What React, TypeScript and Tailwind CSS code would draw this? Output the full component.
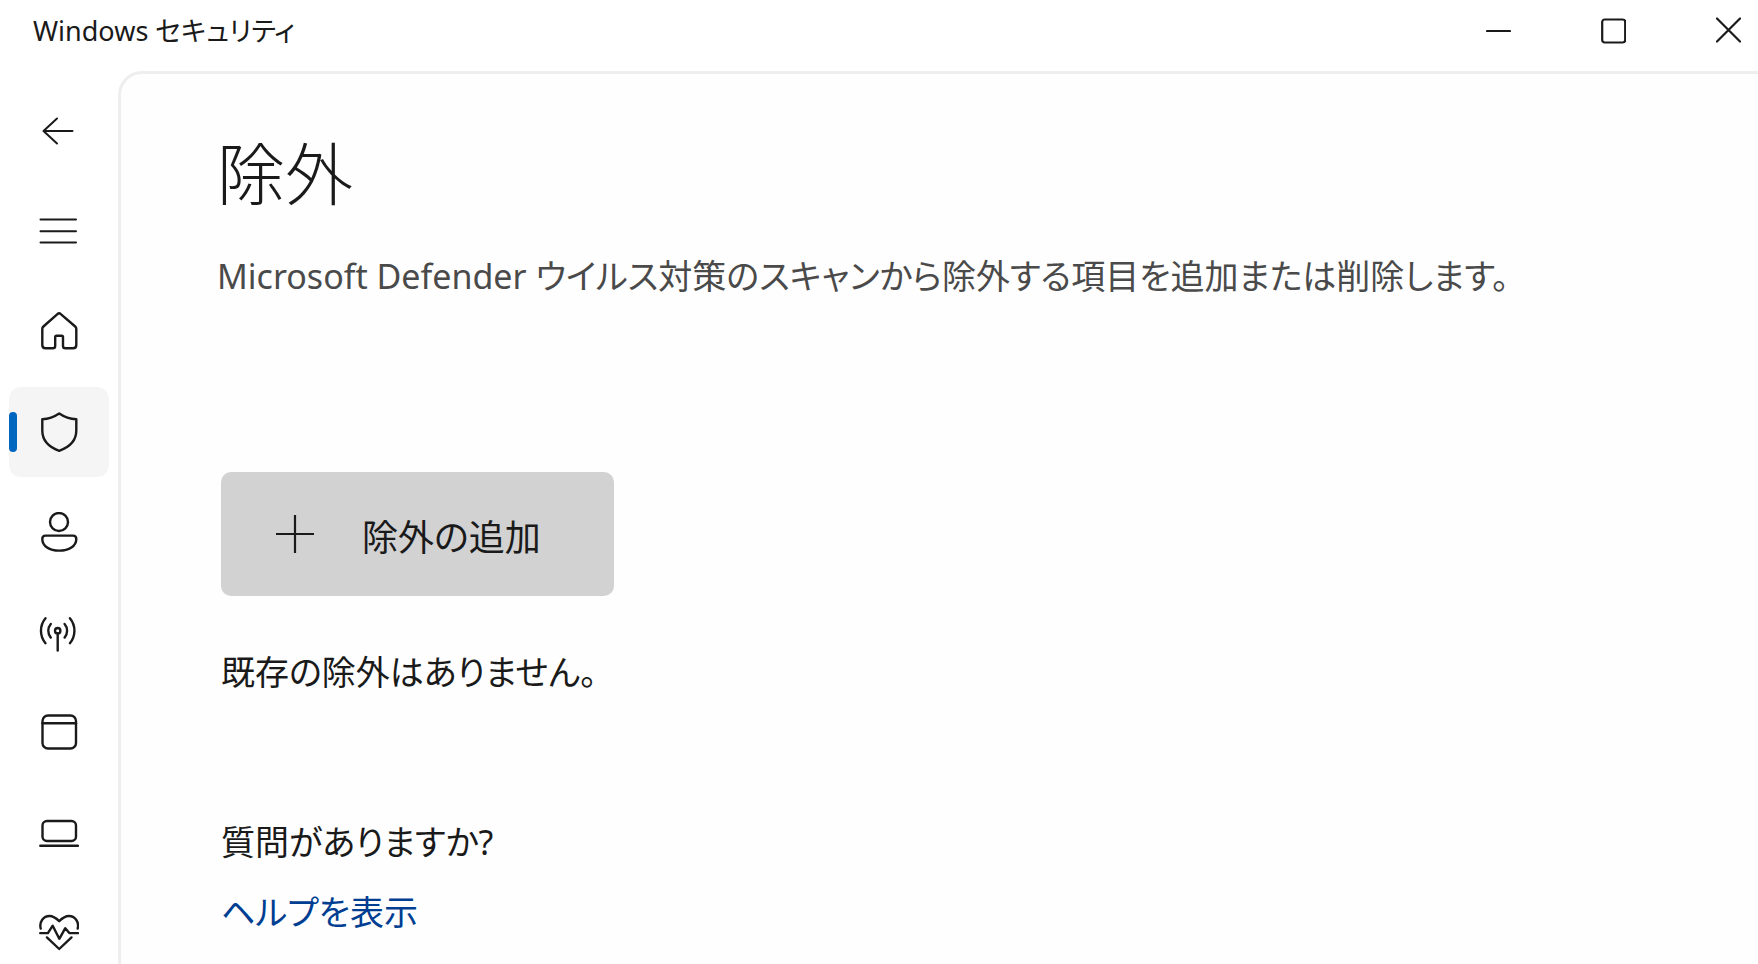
import type { ReactNode } from "react";

const navItems: { id: string; label: string; icon: ReactNode }[] = [
  {
    id: "back",
    label: "戻る",
    icon: <path strokeWidth="2" d="M33.5 19H4.5M18 6.5L4.5 19L18 31.5" />,
  },
  {
    id: "menu",
    label: "メニュー",
    icon: <path strokeWidth="2" d="M1.5 7.5h35.5M1.5 19.2h35.5M1.5 30.6h35.5" />,
  },
  {
    id: "home",
    label: "ホーム",
    icon: (
      <path d="M18.4 2.1L4.4 14.5Q3.3 15.5 3.3 17V33Q3.3 36.3 6.6 36.3H13.8Q16.2 36.3 16.2 34V25Q16.2 23.7 17.5 23.7H22.7Q24 23.7 24 25V34Q24 36.3 26.4 36.3H34Q37.3 36.3 37.3 33V17Q37.3 15.5 36.2 14.5L21.8 2.1Q20.1 .6 18.4 2.1Z" />
    ),
  },
  {
    id: "virus",
    label: "ウイルスと脅威の防止",
    icon: (
      <path d="M20.2 1.5C15 5 9.5 6.9 3.3 7.3V18.5C3.3 28 9 34.8 20.2 38.8C31.4 34.8 37.3 28 37.3 18.5V7.3C31 6.9 25.4 5 20.2 1.5Z" />
    ),
  },
  {
    id: "account",
    label: "アカウントの保護",
    icon: (
      <>
        <circle cx="20" cy="10" r="9" />
        <path d="M6.5 23.6H34Q37.3 23.6 37.3 26.9C37.3 34 30 38.6 20.2 38.6S3.3 34 3.3 26.9Q3.3 23.6 6.5 23.6Z" />
      </>
    ),
  },
  {
    id: "network",
    label: "ファイアウォールとネットワーク保護",
    icon: (
      <>
        <circle cx="18.7" cy="18.7" r="2.7" />
        <path d="M18.7 21.5V38.5" />
        <path d="M11.8 12A10.5 10.5 0 0 0 11.8 25.6M25.6 12A10.5 10.5 0 0 1 25.600 25.600" />
        <path d="M6.500 6.200A19.500 19.500 0 0 0 6.500 31.200M30.900 6.200A19.500 19.500 0 0 1 30.900 31.200" />
      </>
    ),
  },
  {
    id: "apps",
    label: "アプリとブラウザーの制御",
    icon: (
      <>
        <rect x="3.5" y="3.5" width="33.5" height="33" rx="5.5" />
        <path d="M3.5 11.3H37" />
      </>
    ),
  },
  {
    id: "device",
    label: "デバイス セキュリティ",
    icon: (
      <>
        <rect x="3.5" y="9" width="33.5" height="20" rx="4.5" />
        <path d="M1.3 33.8H39" />
      </>
    ),
  },
  {
    id: "health",
    label: "デバイスのパフォーマンスと正常性",
    icon: (
      <>
        <path d="M1.7 16.5C0 10 4.5 4 10.5 4C15 4 17.5 6.5 20.2 9.2C22.9 6.5 25.4 4 29.9 4C35.9 4 40.4 10 38.7 16.5" />
        <path d="M1.2 21.1H8.9L13.7 13.7L20.3 26.8L26.3 16.2L30.3 21.1H39" />
        <path d="M7.9 25.4L20.2 37L32.5 25.4" />
      </>
    ),
  },
];

const windowButtons = [
  { id: "minimize", label: "最小化", icon: <path d="M1 15h23" /> },
  {
    id: "maximize",
    label: "最大化",
    icon: <rect x="1.2" y="3.5" width="23" height="23" rx="2.5" />,
  },
  {
    id: "close",
    label: "閉じる",
    icon: <path d="M1 2.5l23 23M24 2.5l-23 23" />,
  },
];

function TitleBar() {
  return (
    <header className="flex h-[71px] items-center justify-between pb-2.5 pl-[33px]">
      <h1 className="text-[27px] leading-10">Windows セキュリティ</h1>
      <div className="flex gap-[55px]">
        {windowButtons.map((button) => (
          <button
            key={button.id}
            type="button"
            aria-label={button.label}
            className="flex h-10 w-[60px] items-center justify-center"
          >
            <svg
              viewBox="0 0 25 30"
              className="h-[30px] w-[25px]"
              fill="none"
              stroke="currentColor"
              strokeWidth="2.2"
              strokeLinecap="round"
            >
              {button.icon}
            </svg>
          </button>
        ))}
      </div>
    </header>
  );
}

function Sidebar() {
  const selected = "virus";

  return (
    <nav className="flex w-[118px] shrink-0 flex-col items-center gap-2.5 pt-4">
      {navItems.map((item) => (
        <button
          key={item.id}
          type="button"
          aria-label={item.label}
          className={
            item.id === selected
              ? "relative flex h-[90px] w-[100px] shrink-0 items-center justify-center rounded-xl bg-[#f5f5f5]"
              : "relative flex h-[90px] w-[100px] shrink-0 items-center justify-center rounded-xl"
          }
        >
          {item.id === selected && (
            <span className="absolute left-0 h-10 w-2 rounded-full bg-[#0067c0]" />
          )}
          <svg
            viewBox="0 0 40 40"
            className="size-10"
            fill="none"
            stroke="currentColor"
            strokeWidth="2.4"
            strokeLinecap="round"
            strokeLinejoin="round"
          >
            {item.icon}
          </svg>
        </button>
      ))}
    </nav>
  );
}

export default function App() {
  return (
    <div className="flex h-screen flex-col overflow-hidden bg-white font-['Noto_Sans','Noto_Sans_CJK_JP',sans-serif] text-[#1a1a1a] [font-feature-settings:'palt']">
      <TitleBar />
      <div className="flex min-h-0 flex-1">
        <Sidebar />
        <main className="min-w-0 flex-1 rounded-tl-3xl border-t-[3px] border-l-[3px] border-[#eeeeee] bg-[#fefefe] pt-14 pl-24">
          <h2 className="text-[68px] leading-[88px] font-light">除外</h2>
          <p className="mt-8 text-[34px] leading-[52px] text-[#4a4a4a]">
            Microsoft Defender ウイルス対策のスキャンから除外する項目を追加または削除します。
          </p>
          <div className="mt-[170px] pl-1">
            <button
              type="button"
              className="flex h-[124px] w-[393px] items-center rounded-[10px] bg-[#d2d2d2] pl-[55px] text-[36px]"
            >
              <svg
                viewBox="0 0 38 38"
                className="size-[38px]"
                stroke="currentColor"
                strokeWidth="2.2"
              >
                <path d="M19 0v38M0 19h38" />
              </svg>
              <span className="ml-12 pt-2">除外の追加</span>
            </button>
            <p className="mt-12 text-[34px] leading-[56px]">既存の除外はありません。</p>
            <h3 className="mt-[114px] text-[34px] leading-[56px]">質問がありますか?</h3>
            <a href="#help" className="mt-[14px] inline-block text-[34px] leading-[56px] text-[#003e92]">
              ヘルプを表示
            </a>
          </div>
        </main>
      </div>
    </div>
  );
}
